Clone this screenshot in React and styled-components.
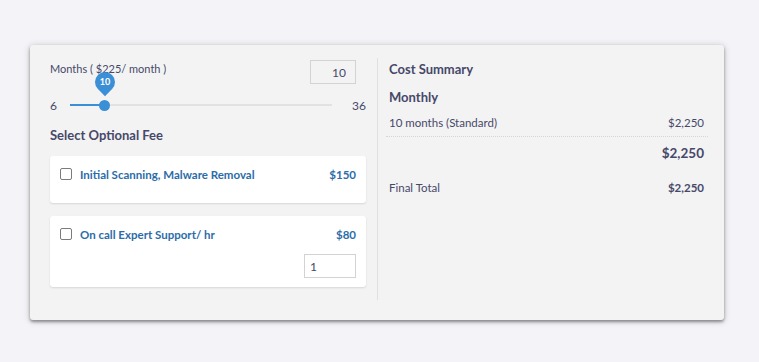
import { useState } from "react";
import styled, { createGlobalStyle } from "styled-components";

const GlobalStyle = createGlobalStyle`
  body {
    margin: 0;
    background: #f4f3f8;
    font-family: Lato, "Liberation Sans", sans-serif;
    color: #46486a;
  }
`;

const Page = styled.div`
  padding: 45px 35px 42px 30px;
`;

const Card = styled.div`
  display: grid;
  grid-template-columns: 347px 1fr;
  height: 275px;
  box-sizing: border-box;
  padding: 13px 0 20px;
  background: #f3f3f3;
  border-radius: 3px;
  box-shadow: 0 2px 3px rgba(0, 0, 0, 0.35), 0 1px 7px rgba(0, 0, 0, 0.22);
`;

const LeftCol = styled.section`
  padding: 2px 11px 0 20px;
`;

const RightCol = styled.section`
  border-left: 1px solid #e0e0e0;
  padding: 2px 16px 0 11px;
`;

const HeaderRow = styled.div`
  display: flex;
  justify-content: space-between;
  align-items: flex-start;
  height: 24px;
`;

const Label = styled.span`
  margin-top: 1px;
  font-size: 11px;
  line-height: 16px;
`;

const NumberBox = styled.input`
  box-sizing: border-box;
  width: ${(p) => p.$width}px;
  height: 24px;
  margin-right: ${(p) => p.$right || 0}px;
  border: 1px solid #d3d3d3;
  background: ${(p) => p.$bg || "transparent"};
  font-family: inherit;
  font-size: 12px;
  color: #46486a;
  text-align: ${(p) => p.$align || "left"};
  padding: 0 ${(p) => (p.$align === "right" ? "9px" : "5px")};
  outline: none;
`;

const SliderRow = styled.div`
  display: flex;
  align-items: center;
  height: 18px;
  margin-top: 12px;
  font-size: 12px;
`;

const Track = styled.div`
  position: relative;
  flex: 1;
  height: 2px;
  margin: 0 20px 0 13px;
  background: #e2e2e2;
`;

const Fill = styled.div`
  height: 100%;
  background: #3a8fd6;
`;

const Thumb = styled.div`
  position: absolute;
  top: 50%;
  width: 11px;
  height: 11px;
  margin: -5.5px 0 0 -5.5px;
  border-radius: 50%;
  background: #3a8fd6;
`;

const Bubble = styled.div`
  position: absolute;
  left: -4.5px;
  top: -28px;
  width: 20px;
  height: 20px;
  border-radius: 50% 50% 50% 0;
  transform: rotate(-45deg);
  background: #3a8fd6;
  span {
    display: block;
    transform: rotate(45deg);
    color: #fff;
    font-size: 9px;
    font-weight: 700;
    line-height: 20px;
    text-align: center;
  }
`;

const Title = styled.h3`
  margin: ${(p) => p.$mt || 0}px 0 0;
  font-size: 13px;
  line-height: 16px;
  font-weight: 700;
  color: #46486a;
`;

const FeeList = styled.div`
  display: flex;
  flex-direction: column;
  gap: 13px;
  margin-top: 13px;
`;

const FeeCard = styled.div`
  box-sizing: border-box;
  min-height: ${(p) => p.$h}px;
  padding: 12px 10px 9px;
  background: #fff;
  border-radius: 3px;
  box-shadow: 0 1px 2px rgba(0, 0, 0, 0.12);
`;

const FeeRow = styled.label`
  display: flex;
  align-items: center;
  height: 12px;
  font-size: 11.5px;
  font-weight: 700;
  color: #2b6ca8;
`;

const Check = styled.input`
  appearance: none;
  width: 12px;
  height: 12px;
  margin: 0 8px 0 0;
  border: 1px solid #7b7b7b;
  border-radius: 2px;
  background: #fff;
`;

const FeeName = styled.span`
  flex: 1;
`;

const QtyRow = styled.div`
  display: flex;
  justify-content: flex-end;
  margin-top: 14px;
`;

const SumRow = styled.div`
  display: flex;
  justify-content: space-between;
  align-items: center;
  margin: ${(p) => p.$mt || 0}px 0 0 ${(p) => (p.$dotted ? -3 : 0)}px;
  padding: ${(p) => (p.$dotted ? "0 4px 5px 3px" : "0 4px 0 0")};
  border-bottom: ${(p) => (p.$dotted ? "1px dotted #d6d6d6" : "none")};
  font-size: ${(p) => p.$size || 11.5}px;
  line-height: 16px;
`;

const Amount = styled.span`
  font-weight: ${(p) => (p.$bold ? 700 : 400)};
`;

export default function App() {
  const [months] = useState(10);
  const pct = ((months - 6) / (36 - 6)) * 100;
  const fees = [
    { name: "Initial Scanning, Malware Removal", price: "$150", h: 47 },
    { name: "On call Expert Support/ hr", price: "$80", h: 71, qty: true },
  ];

  return (
    <Page>
      <GlobalStyle />
      <Card>
        <LeftCol>
          <HeaderRow>
            <Label>Months ( $225/ month )</Label>
            <NumberBox $width={46} $right={10} $align="right" defaultValue={months} />
          </HeaderRow>
          <SliderRow>
            <span>6</span>
            <Track>
              <Fill style={{ width: `${pct}%` }} />
              <Thumb style={{ left: `${pct}%` }}>
                <Bubble>
                  <span>{months}</span>
                </Bubble>
              </Thumb>
            </Track>
            <span>36</span>
          </SliderRow>
          <Title $mt={13}>Select Optional Fee</Title>
          <FeeList>
            {fees.map((fee) => (
              <FeeCard key={fee.name} $h={fee.h}>
                <FeeRow>
                  <Check type="checkbox" />
                  <FeeName>{fee.name}</FeeName>
                  <span>{fee.price}</span>
                </FeeRow>
                {fee.qty && (
                  <QtyRow>
                    <NumberBox $width={52} $bg="#fff" defaultValue={1} />
                  </QtyRow>
                )}
              </FeeCard>
            ))}
          </FeeList>
        </LeftCol>
        <RightCol>
          <Title $mt={1}>Cost Summary</Title>
          <Title $mt={12}>Monthly</Title>
          <SumRow $mt={10} $dotted>
            <span>10 months (Standard)</span>
            <Amount>$2,250</Amount>
          </SumRow>
          <SumRow $mt={8} $size={13.5}>
            <span />
            <Amount $bold>$2,250</Amount>
          </SumRow>
          <SumRow $mt={19}>
            <span>Final Total</span>
            <Amount $bold>$2,250</Amount>
          </SumRow>
        </RightCol>
      </Card>
    </Page>
  );
}
